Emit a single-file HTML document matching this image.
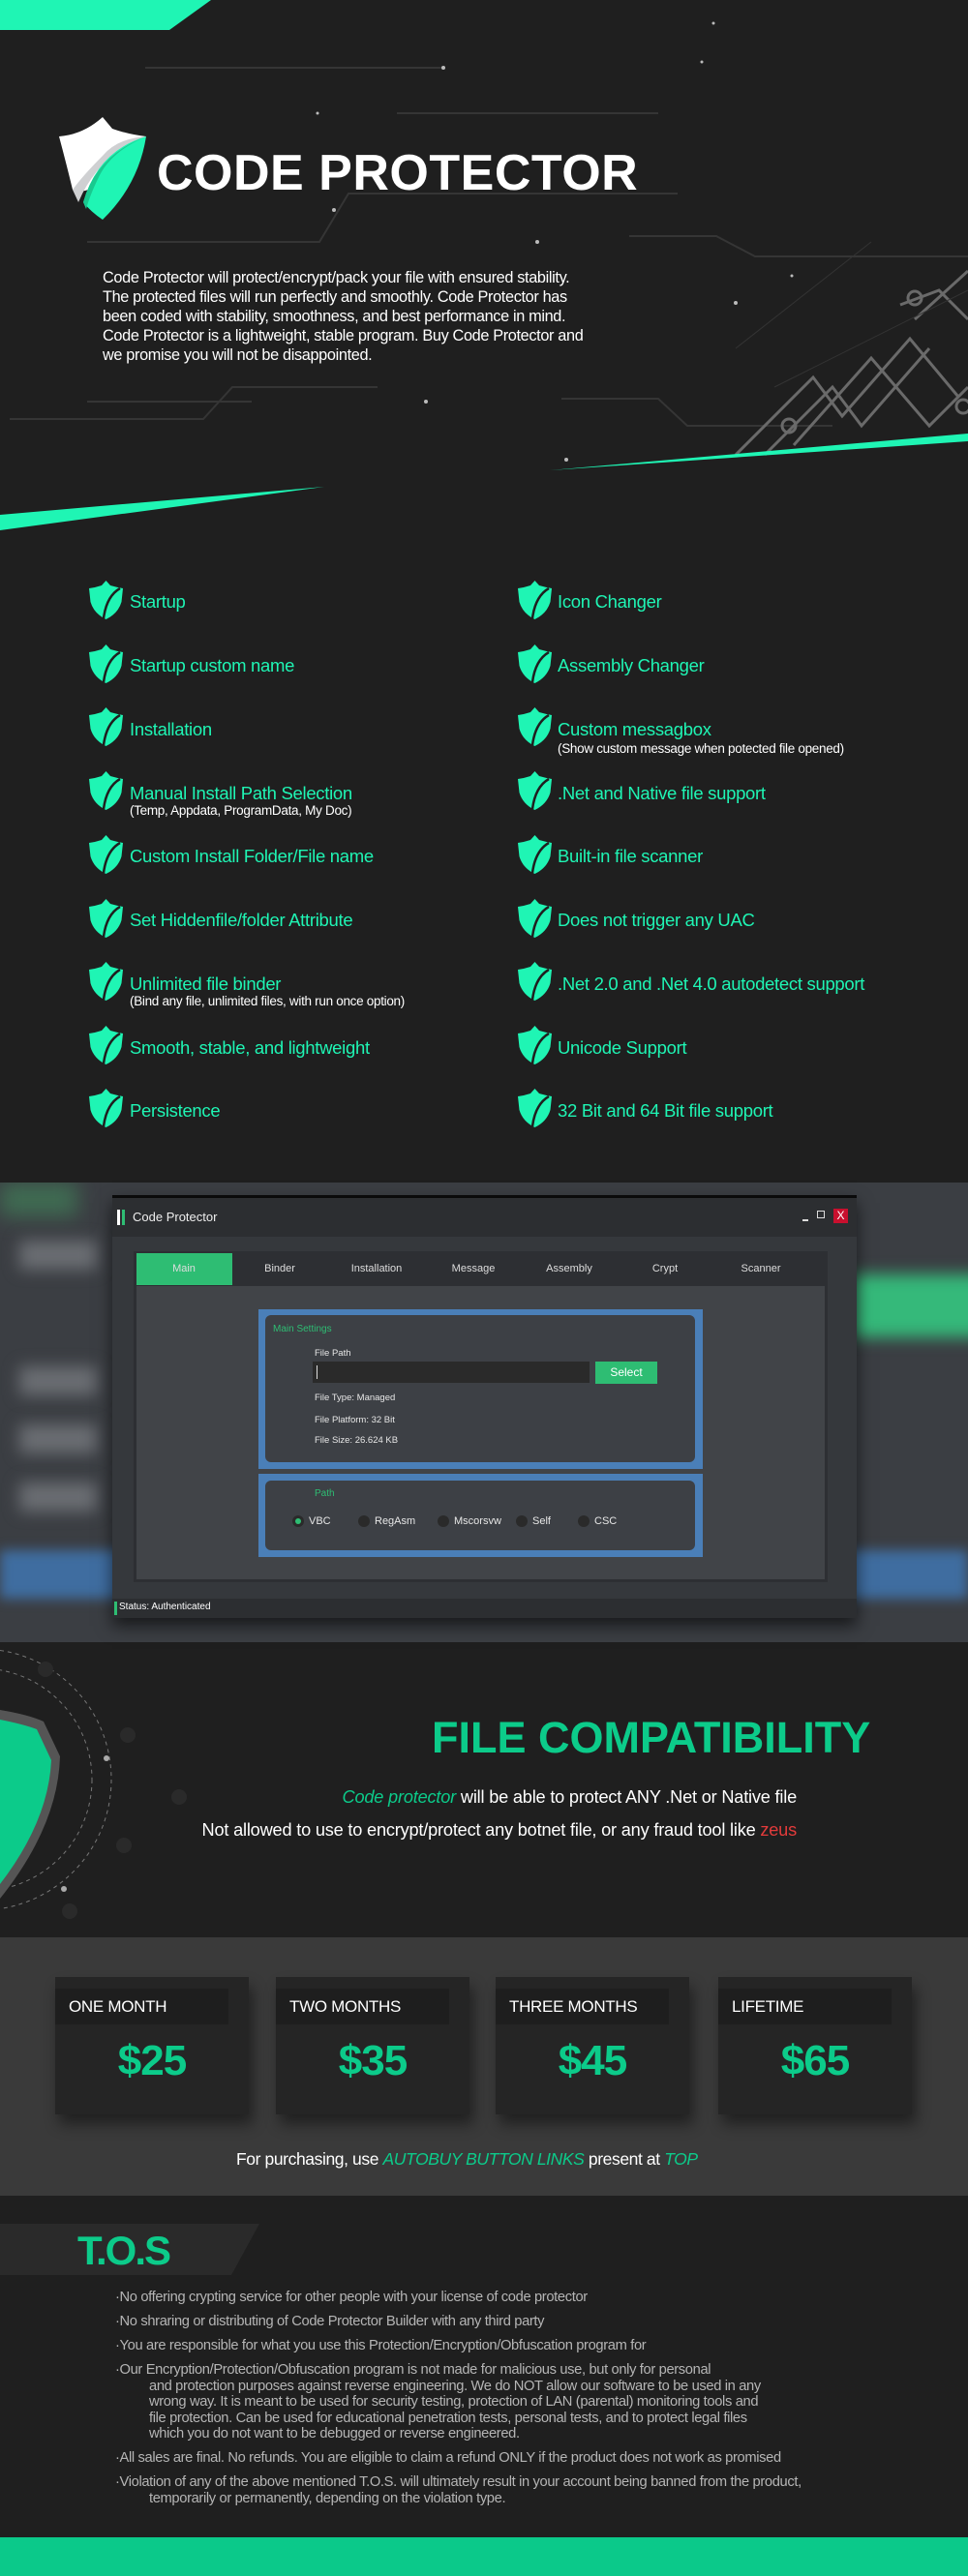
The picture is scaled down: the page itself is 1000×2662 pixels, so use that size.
<!DOCTYPE html>
<html><head><meta charset="utf-8"><style>
*{margin:0;padding:0;box-sizing:border-box}
body{width:1000px;height:2662px;background:#1f1f1f;font-family:"Liberation Sans",sans-serif;position:relative;overflow:hidden}
.a{position:absolute;white-space:nowrap}
.ft{color:#1ff5b4;font-size:18.5px;letter-spacing:-0.3px}
.fs{color:#fff;font-size:13.5px;letter-spacing:-0.3px}
.tab{position:absolute;top:1305px;color:#ddd;font-size:11px;transform:translateX(-50%)}
.sm{font-size:9.5px;color:#e6e6e6}
.card{position:absolute;top:2043px;width:200px;height:142px;background:#252525;box-shadow:4px 10px 14px rgba(0,0,0,.45)}
.card .h{position:absolute;left:0;top:12px;width:179px;height:37px;background:#1e1e1e;color:#fff;font-size:17px;line-height:37px;padding-left:14px;letter-spacing:-0.3px}
.card .p{position:absolute;left:0;width:200px;top:62px;text-align:center;color:#0ccb8a;font-size:44px;font-weight:bold;letter-spacing:-1px}
.tos{position:absolute;left:119px;color:#b5b5b5;font-size:14.7px;letter-spacing:-0.35px;white-space:nowrap;line-height:16.5px}
.in{padding-left:35px}
</style></head><body>

<svg class="a" style="left:0;top:0" width="1000" height="560">
<polygon points="0,0 218,0 175,31 0,31" fill="#1ff5b4"/>
<g stroke="#444" stroke-width="2" fill="none" opacity=".6">
<path d="M150 70 H460"/><path d="M410 117 H680"/><path d="M90 250 H330 L360 200 H700"/><path d="M650 244 H740 L780 265 H1000"/><path d="M90 415 H260"/><path d="M10 433 H210 L240 400 H390"/><path d="M580 412 H680 L710 440 H860"/>
</g>
<g stroke="#6a6a6a" stroke-width="3" fill="none">
<path d="M760 470 L840 390 L870 430 L940 350 L990 410"/>
<path d="M790 470 L860 400 L890 440 L960 360"/>
<path d="M945 330 L1000 280"/><path d="M930 315 L970 300 L1000 330"/>
<path d="M820 460 L900 370 L960 440 L1000 400"/>
<circle cx="815" cy="440" r="7"/><circle cx="945" cy="308" r="7"/><circle cx="995" cy="420" r="7"/>
</g>
<g stroke="#333" stroke-width="1"><path d="M760 360 L900 250"/><path d="M800 400 L1000 300"/></g>
<polygon points="568,486 1000,448 1000,456" fill="#1ff5b4"/>
<polygon points="0,532 335,503 0,548" fill="#1ff5b4"/>
<g fill="#bbb"><circle cx="737" cy="24" r="1.5"/><circle cx="458" cy="70" r="2"/><circle cx="328" cy="117" r="1.5"/><circle cx="725" cy="64" r="1.5"/><circle cx="555" cy="250" r="2"/><circle cx="345" cy="217" r="2"/><circle cx="760" cy="313" r="2"/><circle cx="440" cy="415" r="2"/><circle cx="585" cy="475" r="2"/><circle cx="818" cy="285" r="1.5"/></g>
</svg>
<svg class="a" style="left:61px;top:121px" width="92" height="106" viewBox="0 0 92 106">
<path d="M45 0 L55 12 Q72 18 90 20 L40 70 Q25 80 14 75 Q8 50 0 20 Q25 18 45 0Z" fill="#fff"/>
<path d="M90 20 Q60 22 45 40 Q25 60 14 75 L20 88 Q40 40 90 20Z" fill="#cfd0d2"/>
<path d="M90 20 Q82 70 45 106 Q33 98 25 88 Q40 35 90 20Z" fill="#1ff5b4"/>
<path d="M90 20 Q55 35 42 60 Q32 80 28 95 L25 88 Q38 40 90 20Z" fill="#19c98f"/>
</svg>
<div class="a" style="left:162px;top:149px;color:#fff;font-size:52px;font-weight:bold;letter-spacing:0.5px">CODE PROTECTOR</div>
<div class="a" style="left:106px;top:278px;color:#fff;font-size:16.3px;line-height:19.9px;letter-spacing:-0.35px">Code Protector will protect/encrypt/pack your file with ensured stability.<br>The protected files will run perfectly and smoothly. Code Protector has<br>been coded with stability, smoothness, and best performance in mind.<br>Code Protector is a lightweight, stable program. Buy Code Protector and<br>we promise you will not be disappointed.</div>

<svg width="0" height="0" style="position:absolute"><defs><g id="sh"><path d="M17.5 0 L22 5 Q29 7 35 8 L33.5 22 Q30 34 17.5 40 Q5 34 1.5 22 L0 8 Q7 7 13 5Z" fill="#1ff5b4"/><path d="M32 8 Q18 16 15 39" stroke="#1f1f1f" stroke-width="2.5" fill="none"/></g></defs></svg>
<svg class="a" style="left:0;top:0" width="1000" height="1200">
<use href="#sh" x="92" y="600"/><use href="#sh" x="92" y="666"/><use href="#sh" x="92" y="731"/><use href="#sh" x="92" y="797"/><use href="#sh" x="92" y="863"/><use href="#sh" x="92" y="929"/><use href="#sh" x="92" y="994"/><use href="#sh" x="92" y="1060"/><use href="#sh" x="92" y="1125"/>
<use href="#sh" x="535" y="600"/><use href="#sh" x="535" y="666"/><use href="#sh" x="535" y="731"/><use href="#sh" x="535" y="797"/><use href="#sh" x="535" y="863"/><use href="#sh" x="535" y="929"/><use href="#sh" x="535" y="994"/><use href="#sh" x="535" y="1060"/><use href="#sh" x="535" y="1125"/>
</svg>
<div class="a ft" style="left:134px;top:611px">Startup</div>
<div class="a ft" style="left:134px;top:677px">Startup custom name</div>
<div class="a ft" style="left:134px;top:743px">Installation</div>
<div class="a ft" style="left:134px;top:809px">Manual Install Path Selection</div>
<div class="a fs" style="left:134px;top:830px">(Temp, Appdata, ProgramData, My Doc)</div>
<div class="a ft" style="left:134px;top:874px">Custom Install Folder/File name</div>
<div class="a ft" style="left:134px;top:940px">Set Hiddenfile/folder Attribute</div>
<div class="a ft" style="left:134px;top:1006px">Unlimited file binder</div>
<div class="a fs" style="left:134px;top:1027px">(Bind any file, unlimited files, with run once option)</div>
<div class="a ft" style="left:134px;top:1072px">Smooth, stable, and lightweight</div>
<div class="a ft" style="left:134px;top:1137px">Persistence</div>
<div class="a ft" style="left:576px;top:611px">Icon Changer</div>
<div class="a ft" style="left:576px;top:677px">Assembly Changer</div>
<div class="a ft" style="left:576px;top:743px">Custom messagbox</div>
<div class="a fs" style="left:576px;top:766px">(Show custom message when potected file opened)</div>
<div class="a ft" style="left:576px;top:809px">.Net and Native file support</div>
<div class="a ft" style="left:576px;top:874px">Built-in file scanner</div>
<div class="a ft" style="left:576px;top:940px">Does not trigger any UAC</div>
<div class="a ft" style="left:576px;top:1006px">.Net 2.0 and .Net 4.0 autodetect support</div>
<div class="a ft" style="left:576px;top:1072px">Unicode Support</div>
<div class="a ft" style="left:576px;top:1137px">32 Bit and 64 Bit file support</div>

<div class="a" style="left:0;top:1222px;width:1000px;height:475px;background:#3b3e43;overflow:hidden">
 <div class="a" style="left:0;top:0;width:80px;height:35px;background:#3f6b52;filter:blur(10px)"></div>
 <div class="a" style="left:20px;top:60px;width:80px;height:30px;background:#6a6d72;filter:blur(8px)"></div>
 <div class="a" style="left:20px;top:190px;width:80px;height:30px;background:#6a6d72;filter:blur(8px)"></div>
 <div class="a" style="left:20px;top:250px;width:80px;height:30px;background:#6a6d72;filter:blur(8px)"></div>
 <div class="a" style="left:20px;top:310px;width:80px;height:30px;background:#6a6d72;filter:blur(8px)"></div>
 <div class="a" style="left:880px;top:95px;width:140px;height:65px;background:#35b97a;filter:blur(8px)"></div>
 <div class="a" style="left:0;top:380px;width:1000px;height:50px;background:#3f6da0;filter:blur(6px)"></div>
</div>
<div class="a" style="left:116px;top:1235px;width:769px;height:437px;background:#35383c;border-top:3px solid #0a0a0a;box-shadow:0 8px 16px rgba(0,0,0,.6)">
 <div class="a" style="left:0;top:0;width:769px;height:40px;background:#2c2e31"></div>
 <div class="a" style="left:5px;top:12px;width:3px;height:16px;background:#fff"></div>
 <div class="a" style="left:10px;top:12px;width:3px;height:16px;background:#2ebd73"></div>
 <div class="a" style="left:21px;top:12px;color:#eee;font-size:13px">Code Protector</div>
 <div class="a" style="left:713px;top:22px;width:6px;height:2px;background:#ddd"></div>
 <div class="a" style="left:728px;top:13px;width:8px;height:8px;border:1px solid #ddd"></div>
 <div class="a" style="left:745px;top:11px;width:15px;height:15px;background:#c8102e;color:#fff;font-size:12px;text-align:center;line-height:15px">X</div>
</div>
<div class="a" style="left:138px;top:1293px;width:717px;height:342px;background:#414448;border:3px solid #2d2f33;border-top:none"></div>
<div class="a" style="left:138px;top:1293px;width:717px;height:36px;background:#2d2f33"></div>
<div class="a" style="left:141px;top:1295px;width:99px;height:33px;background:#2ebd73"></div>
<div class="tab" style="left:190px">Main</div><div class="tab" style="left:289px">Binder</div><div class="tab" style="left:389px">Installation</div><div class="tab" style="left:489px">Message</div><div class="tab" style="left:588px">Assembly</div><div class="tab" style="left:687px">Crypt</div><div class="tab" style="left:786px">Scanner</div>
<div class="a" style="left:267px;top:1353px;width:459px;height:165px;background:#4a7fb8"></div>
<div class="a" style="left:274px;top:1359px;width:444px;height:152px;background:#3d4045;border-radius:6px"></div>
<div class="a" style="left:282px;top:1368px;color:#2ebd73;font-size:10px">Main Settings</div>
<div class="a sm" style="left:325px;top:1393px">File Path</div>
<div class="a" style="left:323px;top:1407px;width:286px;height:22px;background:#2a2a2a"></div>
<div class="a" style="left:327px;top:1411px;width:1px;height:14px;background:#ddd"></div>
<div class="a" style="left:615px;top:1407px;width:64px;height:23px;background:#2ebd73;color:#fff;font-size:12px;text-align:center;line-height:23px">Select</div>
<div class="a sm" style="left:325px;top:1439px">File Type: Managed</div>
<div class="a sm" style="left:325px;top:1462px">File Platform: 32 Bit</div>
<div class="a sm" style="left:325px;top:1483px">File Size: 26.624 KB</div>
<div class="a" style="left:267px;top:1523px;width:459px;height:86px;background:#4a7fb8"></div>
<div class="a" style="left:274px;top:1530px;width:444px;height:72px;background:#3d4045;border-radius:6px"></div>
<div class="a" style="left:325px;top:1538px;color:#2ebd73;font-size:10px">Path</div>
<div class="a" style="left:302px;top:1566px;width:12px;height:12px;border-radius:6px;background:#2a2a2a"></div><div class="a" style="left:305px;top:1569px;width:6px;height:6px;border-radius:3px;background:#2ebd73"></div>
<div class="a" style="left:370px;top:1566px;width:12px;height:12px;border-radius:6px;background:#2a2a2a"></div>
<div class="a" style="left:452px;top:1566px;width:12px;height:12px;border-radius:6px;background:#2a2a2a"></div>
<div class="a" style="left:533px;top:1566px;width:12px;height:12px;border-radius:6px;background:#2a2a2a"></div>
<div class="a" style="left:597px;top:1566px;width:12px;height:12px;border-radius:6px;background:#2a2a2a"></div>
<div class="a sm" style="left:319px;top:1566px;font-size:11px">VBC</div>
<div class="a sm" style="left:387px;top:1566px;font-size:11px">RegAsm</div>
<div class="a sm" style="left:469px;top:1566px;font-size:11px">Mscorsvw</div>
<div class="a sm" style="left:550px;top:1566px;font-size:11px">Self</div>
<div class="a sm" style="left:614px;top:1566px;font-size:11px">CSC</div>
<div class="a" style="left:116px;top:1652px;width:769px;height:20px;background:#2c2e31"></div>
<div class="a" style="left:118px;top:1655px;width:3px;height:14px;background:#2ebd73"></div>
<div class="a" style="left:123px;top:1655px;color:#fff;font-size:10px">Status: Authenticated</div>

<svg class="a" style="left:0;top:1697px" width="200" height="305">
<g fill="none" stroke="#777" stroke-width="1" stroke-dasharray="4 4"><circle cx="-20" cy="142" r="135"/><circle cx="-20" cy="142" r="115"/></g>
<path d="M0 70 Q30 75 45 82 L62 118 Q60 190 0 265Z" fill="#555"/>
<path d="M0 80 Q25 85 38 90 L53 122 Q50 185 0 250Z" fill="#0ccb8a"/>
<g fill="#2a2a2a"><circle cx="47" cy="28" r="8"/><circle cx="132" cy="96" r="8"/><circle cx="185" cy="160" r="8"/><circle cx="128" cy="210" r="8"/><circle cx="72" cy="278" r="8"/></g>
<g fill="#aaa"><circle cx="110" cy="120" r="3"/><circle cx="66" cy="255" r="3"/></g>
</svg>
<div class="a" style="left:446px;top:1770px;color:#0ccb8a;font-size:45px;font-weight:bold;letter-spacing:0px">FILE COMPATIBILITY</div>
<div class="a" style="right:177px;top:1847px;color:#fff;font-size:18.2px;letter-spacing:-0.2px"><i style="color:#0ccb8a">Code protector</i> will be able to protect ANY .Net or Native file</div>
<div class="a" style="right:177px;top:1881px;color:#fff;font-size:18.2px;letter-spacing:-0.2px">Not allowed to use to encrypt/protect any botnet file, or any fraud tool like <span style="color:#e23b3b">zeus</span></div>

<div class="a" style="left:0;top:2002px;width:1000px;height:267px;background:#3a3a3a"></div>
<div class="card" style="left:57px"><div class="h">ONE MONTH</div><div class="p">$25</div></div>
<div class="card" style="left:285px"><div class="h">TWO MONTHS</div><div class="p">$35</div></div>
<div class="card" style="left:512px"><div class="h">THREE MONTHS</div><div class="p">$45</div></div>
<div class="card" style="left:742px"><div class="h">LIFETIME</div><div class="p">$65</div></div>
<div class="a" style="left:244px;top:2221px;color:#fff;font-size:17.5px;letter-spacing:-0.4px">For purchasing, use <i style="color:#0ccb8a">AUTOBUY BUTTON LINKS</i> present at <i style="color:#0ccb8a">TOP</i></div>

<svg class="a" style="left:0;top:2298px" width="270" height="54"><polygon points="0,0 268,0 239,53 0,53" fill="#2a2a2a"/></svg>
<div class="a" style="left:80px;top:2302px;color:#0ccb8a;font-size:42px;font-weight:bold;letter-spacing:-2px">T.O.S</div>
<div class="tos" style="top:2366px">·No offering crypting service for other people with your license of code protector</div>
<div class="tos" style="top:2391px">·No shraring or distributing of Code Protector Builder with any third party</div>
<div class="tos" style="top:2416px">·You are responsible for what you use this Protection/Encryption/Obfuscation program for</div>
<div class="tos" style="top:2441px">·Our Encryption/Protection/Obfuscation program is not made for malicious use, but only for personal<br><span class="in">and protection purposes against reverse engineering. We do NOT allow our software to be used in any</span><br><span class="in">wrong way. It is meant to be used for security testing, protection of LAN (parental) monitoring tools and</span><br><span class="in">file protection. Can be used for educational penetration tests, personal tests, and to protect legal files</span><br><span class="in">which you do not want to be debugged or reverse engineered.</span></div>
<div class="tos" style="top:2532px">·All sales are final. No refunds. You are eligible to claim a refund ONLY if the product does not work as promised</div>
<div class="tos" style="top:2557px">·Violation of any of the above mentioned T.O.S. will ultimately result in your account being banned from the product,<br><span class="in">temporarily or permanently, depending on the violation type.</span></div>
<div class="a" style="left:0;top:2622px;width:1000px;height:40px;background:#0bc98a"></div>
</body></html>
